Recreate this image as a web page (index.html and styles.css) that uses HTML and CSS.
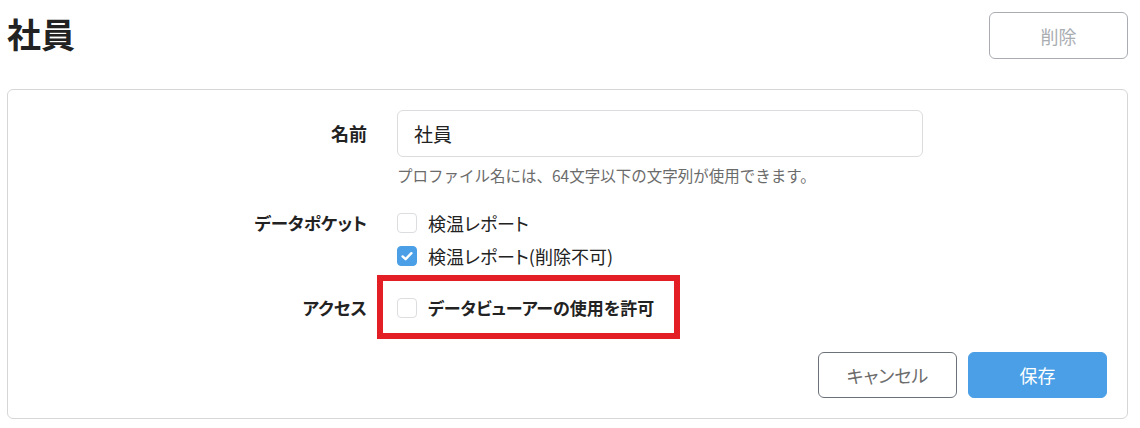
FILE: index.html
```html
<!DOCTYPE html>
<html lang="ja">
<head>
<meta charset="utf-8">
<title>社員</title>
<link rel="stylesheet" href="styles.css">
</head>
<body>
<div class="page">
  <header class="header">
    <h1 class="title">社員</h1>
    <button class="btn btn-delete" disabled>削除</button>
  </header>
  <section class="card">
    <div class="form">
      <div class="label label-name">名前</div>
      <div class="field">
        <div class="input">社員</div>
        <div class="help">プロファイル名には、64文字以下の文字列が使用できます。</div>
      </div>

      <div class="label label-item row-dp">データポケット</div>
      <div class="field row-dp">
        <label class="check"><span class="box"></span><span>検温レポート</span></label>
        <label class="check"><span class="box checked"><svg viewBox="0 0 20 20" width="20" height="20"><path d="M5.6 10.4 L8.6 13.2 L14.4 7.2" fill="none" stroke="#fff" stroke-width="2.4" stroke-linecap="round" stroke-linejoin="round"/></svg></span><span>検温レポート(削除不可)</span></label>
      </div>

      <div class="label label-item row-access">アクセス</div>
      <div class="field row-access">
        <label class="check check-bold"><span class="box"></span><span>データビューアーの使用を許可</span></label>
        <div class="highlight"></div>
      </div>
    </div>
    <div class="actions">
      <button class="btn btn-cancel">キャンセル</button>
      <button class="btn btn-save">保存</button>
    </div>
  </section>
</div>
</body>
</html>
```

FILE: styles.css
```css
* { box-sizing: border-box; }
html, body { margin: 0; padding: 0; background: #fff; }
body {
  font-family: "Noto Sans CJK JP", "Noto Sans", sans-serif;
  color: #222;
  font-feature-settings: "palt";
}
.page { padding: 0 12px 0 7px; width: 1140px; }
.header {
  display: flex;
  justify-content: space-between;
  align-items: flex-start;
  height: 89px;
}
.title {
  margin: 10px 0 0 0;
  font-size: 34px;
  line-height: 48px;
  font-weight: 700;
  color: #222;
}
.btn {
  font-family: inherit;
  font-feature-settings: "palt";
  font-size: 18px;
  width: 139px;
  height: 47px;
  border-radius: 6px;
  background: #fff;
  cursor: pointer;
  padding: 0;
}
.btn-delete {
  margin-top: 12px;
  border: 1px solid #a9adb2;
  color: #a9adb2;
}
.card {
  border: 1px solid #d6d6d6;
  border-radius: 6px;
  padding: 20px 20px 20px 0;
  height: 330px;
}
.form {
  display: grid;
  grid-template-columns: 359px 1fr;
  column-gap: 30px;
  align-items: start;
}
.label {
  font-size: 17.5px;
  font-weight: 700;
  text-align: right;
  color: #222;
}
.label-name { line-height: 47px; font-size: 18px; }
.label-item { line-height: 33px; }
.input {
  width: 526px;
  height: 47px;
  border: 1px solid #dcdcde;
  border-radius: 6px;
  padding: 0 16px;
  font-size: 19px;
  line-height: 45px;
  color: #222;
}
.help {
  margin-top: 8px;
  font-size: 15.5px;
  line-height: 20px;
  color: #6b6b6b;
  font-feature-settings: normal;
}
.row-dp { margin-top: 21px; }
.row-access { margin-top: 19px; }
.field { position: relative; }
.check {
  display: flex;
  align-items: center;
  gap: 11px;
  height: 33px;
  font-size: 18px;
  color: #222;
}
.check-bold { font-weight: 700; font-size: 17px; }
.box {
  width: 20px;
  height: 20px;
  border: 1px solid #dcdde0;
  border-radius: 4px;
  background: #fff;
  flex: none;
  display: flex;
}
.box.checked {
  background: #4a9fe6;
  border-color: #4a9fe6;
}
.box.checked svg { margin: -1px; }
.highlight {
  position: absolute;
  left: -20px;
  top: -16px;
  width: 303px;
  height: 64px;
  border: 6px solid #e31e24;
}
.actions {
  display: flex;
  justify-content: flex-end;
  gap: 11px;
  margin-top: 28px;
}
.btn-cancel {
  height: 46px;
  border: 1px solid #6c7279;
  color: #6c6c6c;
}
.btn-save {
  height: 46px;
  border: 1px solid #4a9fe6;
  background: #4a9fe6;
  color: #fff;
}
```
